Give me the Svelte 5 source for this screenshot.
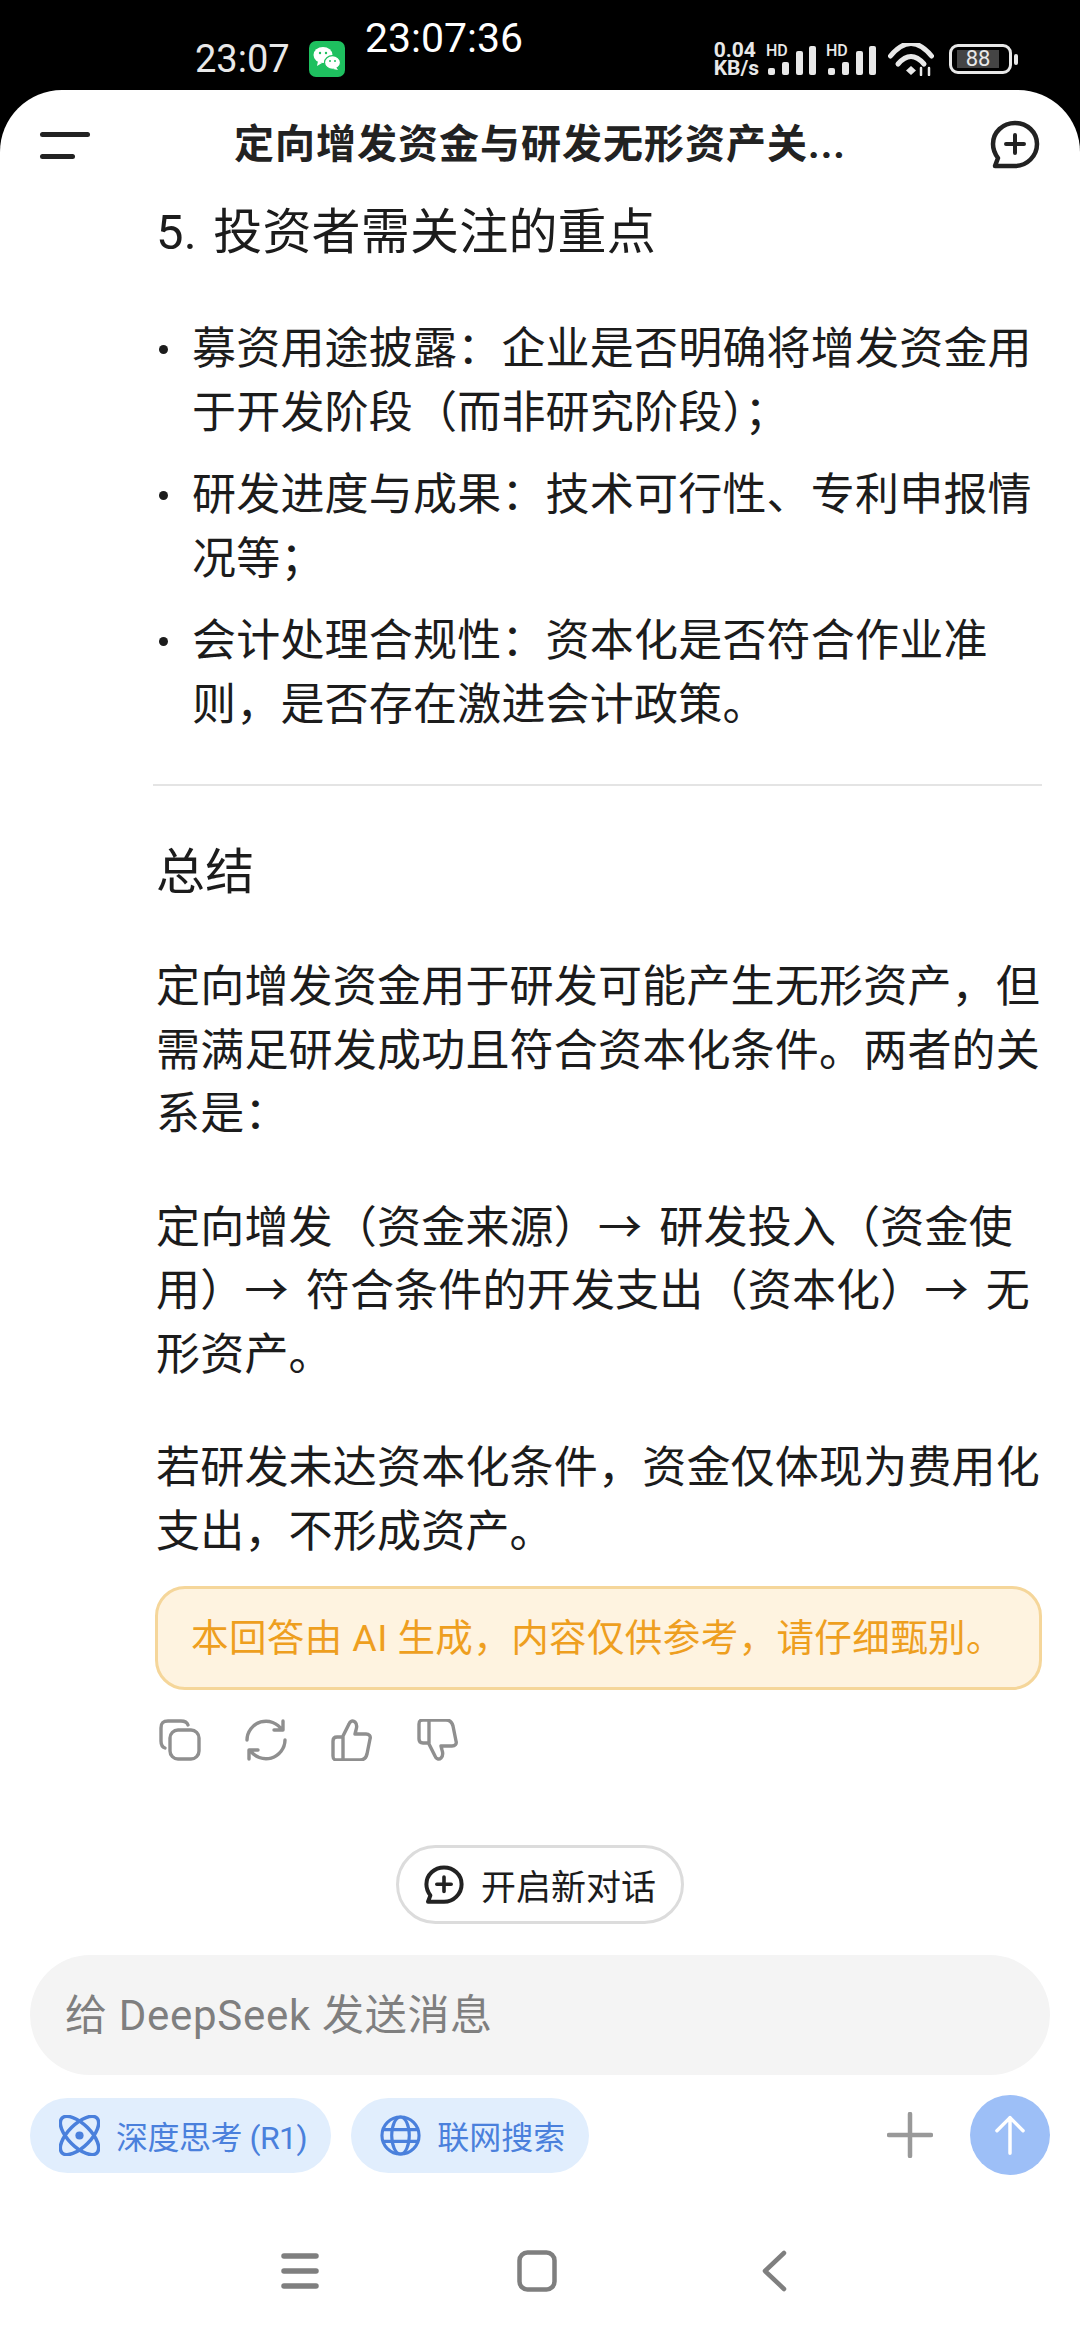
<script>
	// full-width punctuation kept as escapes so it can't get flattened to ascii
	const c = '\uFF0C';
	const col = '\uFF1A';
	const semi = '\uFF1B';
	const lp = '\uFF08';
	const rp = '\uFF09';

	const bullets = [
		`募资用途披露${col}企业是否明确将增发资金用于开发阶段${lp}而非研究阶段${rp}${semi}`,
		`研发进度与成果${col}技术可行性、专利申报情况等${semi}`,
		`会计处理合规性${col}资本化是否符合作业准则${c}是否存在激进会计政策。`
	];
	const paragraphs = [
		`定向增发资金用于研发可能产生无形资产${c}但需满足研发成功且符合资本化条件。两者的关系是${col}`,
		`定向增发${lp}资金来源${rp}→ 研发投入${lp}资金使用${rp}→ 符合条件的开发支出${lp}资本化${rp}→ 无形资产。`,
		`若研发未达资本化条件${c}资金仅体现为费用化支出${c}不形成资产。`
	];
	const notice = `本回答由 AI 生成${c}内容仅供参考${c}请仔细甄别。`;
	const thumb =
		'M12 41V17L18 5C19 2 22 1 24 3C26 5 26 8 25 11L24 15H35C38 15 40 17 39 20L36 35C35 39 33 41 29 41H6C3 41 2 40 2 37V22C2 19 4 18 6 18H12';
	const bubble =
		'M25 3C37 3 47 12 47 24C47 36 37 46 25 46H5L8 38C5 34 3 29 3 24C3 12 13 3 25 3Z';
	const bars = [
		[0, 24, 7],
		[14, 18, 13],
		[28, 7, 24],
		[41, 2, 29]
	];
</script>

<div class="page">
	<div class="status">
		<span class="clock">23:07</span>
		<svg class="wechat" viewBox="0 0 36 36">
			<rect width="36" height="36" rx="7" fill="#1ec05f" />
			<ellipse cx="14" cy="14" rx="9.5" ry="8" fill="#fff" />
			<path d="M9 20l-1 5 5-3z" fill="#fff" />
			<ellipse cx="23.5" cy="21.5" rx="8" ry="6.8" fill="#fff" stroke="#1ec05f" stroke-width="1.2" />
			<path d="M27 26l2 3-5-1z" fill="#fff" />
			<circle cx="11" cy="12" r="1.2" fill="#1ec05f" />
			<circle cx="17" cy="12" r="1.2" fill="#1ec05f" />
			<circle cx="21" cy="20" r="1" fill="#1ec05f" />
			<circle cx="26" cy="20" r="1" fill="#1ec05f" />
		</svg>
		<span class="floating-clock">23:07:36</span>
		<div class="status-right">
			<div class="speed"><span>0.04</span><span>KB/s</span></div>
			{#each [0, 1] as sim}
				<div class="signal">
					<span class="hd">HD</span>
					<svg viewBox="0 0 48 31" width="48" height="31">
						{#each bars as [x, y, h]}
							<rect {x} {y} width="7" height={h} rx="2" fill="#e8e8e8" />
						{/each}
					</svg>
				</div>
			{/each}
			<svg class="wifi" viewBox="0 0 46 33" fill="none" stroke="#e8e8e8" stroke-linecap="round">
				<path d="M2.5 13Q23-12 43.5 13" stroke-width="5" />
				<path d="M10 21Q23 6 36 21" stroke-width="5" />
				<path d="M23 23l5 4.5-5 4.5-5-4.5z" fill="#e8e8e8" stroke="none" />
				<path d="M33 32v-7M41 32v-7" stroke-width="2.5" />
			</svg>
			<div class="battery">
				<div class="battery-body"><span>88</span></div>
				<div class="battery-tip"></div>
			</div>
		</div>
	</div>

	<div class="sheet">
		<header>
			<div class="menu-icon"><i></i><i></i></div>
			<div class="title">定向增发资金与研发无形资产关...</div>
			<svg class="new-icon" viewBox="0 0 50 50" fill="none" stroke="#222" stroke-width="4.5" stroke-linejoin="round">
				<path d={bubble} />
				<path d="M16 24H34M25 15V33" stroke-width="4" stroke-linecap="round" />
			</svg>
		</header>

		<main>
			<h3>5. 投资者需关注的重点</h3>
			<ul>
				{#each bullets as item}
					<li><span class="dot"></span><span>{item}</span></li>
				{/each}
			</ul>
			<hr />
			<h3 class="summary">总结</h3>
			{#each paragraphs as p}
				<p>{p}</p>
			{/each}
			<div class="notice">{notice}</div>
			<div class="actions">
				<svg viewBox="0 0 42 42">
					<rect x="11" y="11" width="29" height="29" rx="8" />
					<path d="M6 29C3 28 2 26 2 22V9C2 4 4 2 9 2H22C26 2 28 3 29 6" />
				</svg>
				<svg viewBox="0 0 42 42">
					<path d="M2 21A19 19 0 0 1 37 11M38 2V11H29" />
					<path d="M40 21A19 19 0 0 1 5 31M4 40V31H13" />
				</svg>
				<svg viewBox="0 0 42 42"><path d={thumb} /></svg>
				<svg viewBox="0 0 42 42"><path d={thumb} transform="matrix(1 0 0 -1 0 42)" /></svg>
			</div>
		</main>

		<div class="new-chat">
			<button>
				<svg viewBox="0 0 50 50" fill="none" stroke="#222" stroke-width="5" stroke-linejoin="round">
					<path d={bubble} />
					<path d="M16 24H34M25 15V33" stroke-width="4.5" stroke-linecap="round" />
				</svg>
				<span>开启新对话</span>
			</button>
		</div>

		<div class="input">给 DeepSeek 发送消息</div>

		<div class="tools">
			<div class="chip think">
				<svg viewBox="0 0 40 40" fill="none" stroke="#4a80dc" stroke-width="3.4">
					<ellipse cx="20" cy="20" rx="24" ry="11" transform="rotate(45 20 20)" />
					<ellipse cx="20" cy="20" rx="24" ry="11" transform="rotate(-45 20 20)" />
					<circle cx="20" cy="20" r="4" fill="#4a80dc" stroke="none" />
				</svg>
				深度思考 (R1)
			</div>
			<div class="chip">
				<svg viewBox="0 0 42 42" fill="none" stroke="#4a80dc" stroke-width="3.2">
					<circle cx="21" cy="21" r="19" />
					<ellipse cx="21" cy="21" rx="9" ry="19" />
					<path d="M3 15H39M3 27H39" />
				</svg>
				联网搜索
			</div>
			<svg class="plus" viewBox="0 0 46 46" stroke="#999" stroke-width="4.5" stroke-linecap="round">
				<path d="M23 2V44M2 23H44" />
			</svg>
			<div class="send">
				<svg viewBox="0 0 40 46" fill="none" stroke="#fff" stroke-width="4" stroke-linecap="round" stroke-linejoin="round">
					<path d="M20 44V3M5 18L20 3L35 18" />
				</svg>
			</div>
		</div>

		<nav>
			<div class="nav-item">
				<svg width="38" height="38" viewBox="0 0 38 38" stroke="#7f7f7f" stroke-width="5.5" stroke-linecap="round">
					<path d="M3 4H35M3 19H35M3 34H35" />
				</svg>
			</div>
			<div class="nav-item">
				<svg width="40" height="42" viewBox="0 0 40 42" fill="none" stroke="#7f7f7f" stroke-width="4.5">
					<rect x="2.5" y="2.5" width="35" height="37" rx="8" />
				</svg>
			</div>
			<div class="nav-item">
				<svg width="26" height="42" viewBox="0 0 26 42" fill="none" stroke="#7f7f7f" stroke-width="4.5" stroke-linecap="round" stroke-linejoin="round">
					<path d="M23 3L4 21L23 39" />
				</svg>
			</div>
		</nav>
	</div>
</div>

<style>
	:global(body) {
		background: #000;
		font-family: Roboto, 'Noto Sans CJK SC', sans-serif;
	}

	.page {
		background: #000;
		display: flex;
		flex-direction: column;
		height: 2340px;
		overflow: hidden;
		width: 1080px;
	}

	.status {
		align-items: center;
		box-sizing: border-box;
		color: #e8e8e8;
		display: flex;
		flex: none;
		height: 90px;
		padding: 28px 62px 0 195px;
		position: relative;
	}

	.clock {
		font-size: 38px;
		font-weight: 400;
		margin-right: 19px;
	}

	.wechat {
		height: 36px;
		width: 36px;
	}

	.floating-clock {
		color: #fff;
		font-size: 41px;
		font-weight: 400;
		left: 365px;
		line-height: 1;
		position: absolute;
		top: 18px;
	}

	.status-right {
		align-items: center;
		display: flex;
		margin-left: auto;
	}

	.speed {
		display: flex;
		flex-direction: column;
		font-size: 21px;
		font-weight: 700;
		line-height: 18px;
		margin-right: 9px;
	}

	.signal {
		height: 31px;
		margin-right: 12px;
		position: relative;
		width: 48px;
	}

	.signal svg {
		display: block;
	}

	.hd {
		font-size: 16px;
		font-weight: 500;
		left: -2px;
		line-height: 1;
		position: absolute;
		top: -1px;
	}

	.wifi {
		height: 33px;
		margin-right: 15px;
		width: 46px;
	}

	.battery {
		align-items: center;
		display: flex;
		gap: 2px;
	}

	.battery-body {
		border: 3px solid #e8e8e8;
		border-radius: 9px;
		box-sizing: border-box;
		height: 30px;
		padding: 3px 5px;
		width: 63px;
	}

	.battery-body span {
		background: #444;
		display: block;
		font-size: 22px;
		height: 18px;
		line-height: 18px;
		text-align: center;
		width: 42px;
	}

	.battery-tip {
		background: #e8e8e8;
		border-radius: 2px;
		height: 11px;
		width: 4px;
	}

	.sheet {
		background: #fff;
		border-radius: 62px 62px 0 0;
		display: flex;
		flex: 1;
		flex-direction: column;
		min-height: 0;
	}

	header {
		align-items: center;
		box-sizing: border-box;
		display: flex;
		flex: none;
		height: 110px;
		justify-content: space-between;
		padding: 0 40px 0;
	}

	.menu-icon {
		display: flex;
		flex-direction: column;
		gap: 17px;
		width: 50px;
	}

	.menu-icon i {
		background: #222;
		border-radius: 3px;
		display: block;
		height: 5px;
	}

	.menu-icon i:last-child {
		width: 35px;
	}

	.title {
		color: #222;
		font-size: 40px;
		font-weight: 700;
		letter-spacing: 1px;
		line-height: 1;
	}

	.new-icon {
		height: 50px;
		width: 50px;
	}

	main {
		color: #1c1c1c;
		flex: 1;
		font-size: 44px;
		letter-spacing: 0.2px;
		line-height: 63.5px;
		padding: 0 38px 0 156px;
	}

	h3 {
		font-size: 49px;
		font-weight: 400;
		line-height: 66px;
		margin: 0;
		word-spacing: 4px;
	}

	ul {
		display: flex;
		flex-direction: column;
		gap: 19px;
		list-style: none;
		margin: 52px 0 0;
		padding: 0;
	}

	li {
		display: flex;
	}

	.dot {
		background: #1c1c1c;
		border-radius: 50%;
		flex: none;
		height: 9px;
		margin: 27px 24px 0 3px;
		width: 9px;
	}

	hr {
		background: #e4e4e4;
		border: none;
		height: 2px;
		margin: 47px 0 54px -3px;
	}

	p {
		margin: 50px 0 0;
		word-spacing: 6px;
	}

	.notice {
		background: #fef3e0;
		border: 3px solid #f5d69a;
		border-radius: 30px;
		box-sizing: border-box;
		color: #ee9f1f;
		font-size: 37.5px;
		height: 104px;
		letter-spacing: 0.4px;
		line-height: 98px;
		margin: 22px 0 0 -1px;
		padding-left: 33px;
		white-space: nowrap;
	}

	.actions {
		display: flex;
		gap: 44px;
		margin: 29px 0 0 3px;
	}

	.actions svg {
		fill: none;
		height: 42px;
		stroke: #8f8f8f;
		stroke-linecap: round;
		stroke-linejoin: round;
		stroke-width: 3.4;
		width: 42px;
	}

	.new-chat {
		display: flex;
		flex: none;
		justify-content: center;
		margin-bottom: 31px;
	}

	button {
		align-items: center;
		background: #fff;
		border: 3px solid #dcdcdc;
		border-radius: 40px;
		box-sizing: border-box;
		color: #1c1c1c;
		display: flex;
		font-family: inherit;
		font-size: 35px;
		gap: 17px;
		height: 79px;
		padding: 0 0 0 25px;
		white-space: nowrap;
		width: 288px;
	}

	button svg {
		flex: none;
		height: 40px;
		width: 40px;
	}

	.input {
		align-items: center;
		background: #f4f4f4;
		border-radius: 60px;
		box-sizing: border-box;
		color: #7f7f7f;
		display: flex;
		flex: none;
		font-size: 42px;
		height: 120px;
		letter-spacing: 0.7px;
		margin: 0 30px;
		padding: 0 0 8px 35px;
	}

	.tools {
		align-items: center;
		display: flex;
		flex: none;
		gap: 20px;
		margin: 20px 30px 0;
	}

	.chip {
		align-items: center;
		background: #e1eefd;
		border-radius: 38px;
		color: #4a80dc;
		display: flex;
		font-size: 32px;
		gap: 16px;
		height: 75px;
		padding: 0 24px 0 29px;
	}

	.think {
		letter-spacing: -0.5px;
	}

	.chip svg {
		flex: none;
		height: 41px;
		width: 41px;
	}

	.plus {
		height: 46px;
		margin-left: auto;
		margin-right: 17px;
		width: 46px;
	}

	.send {
		align-items: center;
		background: #9dbff7;
		border-radius: 50%;
		display: flex;
		height: 80px;
		justify-content: center;
		width: 80px;
	}

	.send svg {
		height: 40px;
		width: 36px;
	}

	nav {
		align-items: center;
		display: flex;
		flex: none;
		height: 42px;
		justify-content: center;
		margin: 75px 0 48px;
		padding-right: 7px;
	}

	.nav-item {
		display: flex;
		justify-content: center;
		width: 237px;
	}
</style>
